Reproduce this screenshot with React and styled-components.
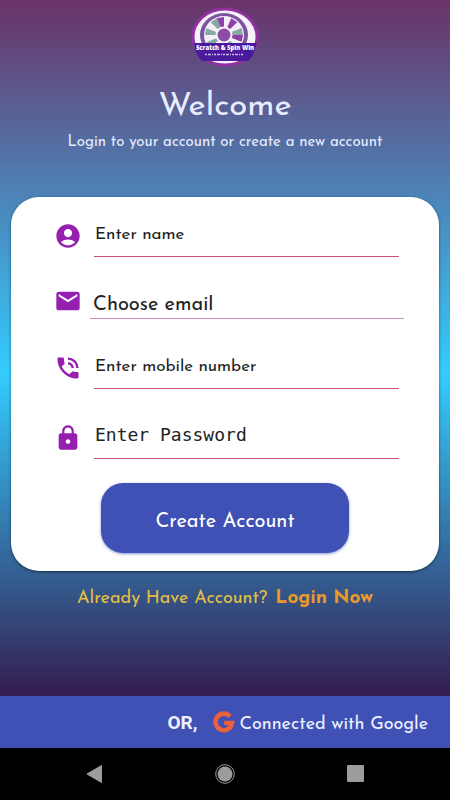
import React from 'react'
import styled, { createGlobalStyle } from 'styled-components'
import {
  MdAccountCircle,
  MdEmail,
  MdPhoneInTalk,
  MdLock,
} from 'react-icons/md'

const fields = [
  { id: 'name', type: 'text', text: 'Enter name', icon: <MdAccountCircle /> },
  { id: 'email', type: 'email', text: 'Choose email', icon: <MdEmail />, compact: true },
  { id: 'mobile', type: 'tel', text: 'Enter mobile number', icon: <MdPhoneInTalk /> },
  { id: 'password', type: 'password', text: 'Enter Password', icon: <MdLock />, mono: true },
]

const wedges = [
  '#8e3fa8', '#f4eef8', '#86a9a6', '#f4eef8', '#8e3fa8', '#f4eef8',
  '#86a9a6', '#f4eef8', '#86a9a6', '#f4eef8', '#86a9a6', '#8e3fa8',
  '#f4eef8', '#8e3fa8', '#f4eef8', '#86a9a6',
]

const Logo = () => {
  const point = (i) => {
    const a = (i * Math.PI * 2) / wedges.length
    return `${33 + 19 * Math.cos(a)} ${28 + 18 * Math.sin(a)}`
  }

  return (
    <svg width='68' height='60' viewBox='0 0 68 60' role='img' aria-label='Scratch & Spin Win'>
      <defs>
        <clipPath id='badge'>
          <ellipse cx='34' cy='30' rx='32' ry='28' />
        </clipPath>
      </defs>
      <ellipse cx='34' cy='30' rx='32' ry='28' fill='#f6f1fa' />
      <g clipPath='url(#badge)'>
        <ellipse cx='33' cy='28' rx='24' ry='22' fill='#7d559c' />
        <ellipse cx='33' cy='28' rx='20' ry='19' fill='#f6f1fa' />
        {wedges.map((color, i) => (
          <path key={i} d={`M33 28L${point(i)}L${point(i + 1)}Z`} fill={color} />
        ))}
        <circle cx='33' cy='28' r='8.500' fill='#f6f1fa' />
        <circle cx='33' cy='28' r='6.500' fill='#8b4ba6' />
      </g>
      <ellipse cx='34' cy='30' rx='32' ry='28' fill='none' stroke='#93309f' strokeWidth='3' />
      <path d='M3 36H66L63 45Q61 51 57 54H11Q6 49 4 43Z' fill='#4a1a9c' />
      <LogoText x='34' y='43' textAnchor='middle'>Scratch &amp; Spin Win</LogoText>
      <path d='M14 47.500H53' stroke='#cdb9e6' strokeWidth='1.400' strokeDasharray='2 1 3 1 1 1' />
    </svg>
  )
}

const GoogleIcon = () => (
  <svg width='22' height='22' viewBox='0 0 22 22' aria-hidden='true'>
    <path
      d='M17.100 5.400A8.300 8.300 0 1 0 19.100 12H11.200'
      fill='none'
      stroke='#e8603c'
      strokeWidth='4.600'
    />
  </svg>
)

const App = () => {
  return (
    <>
      <GlobalStyle />
      <Page>
        <Header>
          <Logo />
          <h1>Welcome</h1>
          <p>Login to your account or create a new account</p>
        </Header>
        <Card onSubmit={(e) => e.preventDefault()}>
          {fields.map(({ id, type, text, icon, compact, mono }) => (
            <Field key={id} $compact={compact}>
              <label htmlFor={id} aria-label={text}>{icon}</label>
              <Input
                id={id}
                type={type}
                placeholder={text}
                $compact={compact}
                $mono={mono}
              />
            </Field>
          ))}
          <SubmitButton type='submit'>Create Account</SubmitButton>
        </Card>
        <LoginRow>
          <span>Already Have Account?</span>
          <a href='#login'>Login Now</a>
        </LoginRow>
        <GoogleBar>
          <strong>OR,</strong>
          <GoogleButton type='button'>
            <GoogleIcon />
            <span>Connected with Google</span>
          </GoogleButton>
        </GoogleBar>
      </Page>
      <SystemNav>
        <button type='button' aria-label='Back'>
          <svg width='20' height='20' viewBox='0 0 20 20'>
            <path d='M3 10L17.500 1.500V18.500Z' fill='#9c9c9c' stroke='#9c9c9c' strokeLinejoin='round' />
          </svg>
        </button>
        <button type='button' aria-label='Home'>
          <svg width='20' height='20' viewBox='0 0 20 20'>
            <circle cx='10' cy='10' r='7.500' fill='#9c9c9c' />
            <circle cx='10' cy='10' r='9.300' fill='none' stroke='#9c9c9c' />
          </svg>
        </button>
        <button type='button' aria-label='Recent apps'>
          <svg width='20' height='20' viewBox='0 0 20 20'>
            <rect x='1' y='1' width='17' height='17' rx='1' fill='#9c9c9c' />
          </svg>
        </button>
      </SystemNav>
    </>
  )
}

const GlobalStyle = createGlobalStyle`
  * {
    box-sizing: border-box;
  }
  body {
    margin: 0;
    background: #000;
  }
  #root {
    min-height: 100vh;
    display: flex;
    flex-direction: column;
  }
  body, button, input {
    font-family: 'Josefin Sans', Lato, sans-serif;
  }
  button {
    border: 0;
    padding: 0;
    background: none;
    cursor: pointer;
  }
  svg {
    display: block;
  }
`

const LogoText = styled.text`
  fill: #fff;
  font-family: 'Open Sans', sans-serif;
  font-size: 6px;
  font-weight: 800;
`

const Page = styled.main`
  flex: 1;
  display: flex;
  flex-direction: column;
  background: linear-gradient(#693368, #33ccff 50%, #360033);
`

const Header = styled.header`
  display: flex;
  flex-direction: column;
  align-items: center;
  padding-top: 7px;
  color: #e8ecff;
  text-align: center;
  h1 {
    margin: 20px 0 0;
    font-size: 33px;
    font-weight: 400;
    line-height: 40px;
  }
  p {
    margin: 6px 0 0;
    font-size: 15px;
    line-height: 20px;
  }
`

const Card = styled.form`
  display: flex;
  flex-direction: column;
  margin: 44px 11px 0;
  padding: 12px 40px 18px;
  border-radius: 28px;
  background: #fff;
  box-shadow: 0 1px 3px rgba(0, 0, 0, 0.5);
`

const Field = styled.div`
  display: flex;
  align-items: center;
  gap: ${({ $compact }) => ($compact ? '8px' : '12px')};
  margin-top: ${({ $compact }) => ($compact ? '30px' : '22px')};
  margin-left: 3px;
  margin-right: ${({ $compact }) => ($compact ? '-5px' : '0')};
  &:first-child {
    margin-top: 0;
  }
  label {
    padding: ${({ $compact }) => ($compact ? '0 0 4px' : '6px 0 0')};
    color: #951fae;
    font-size: 28px;
  }
`

const Input = styled.input`
  flex: 1;
  min-width: 0;
  height: ${({ $compact }) => ($compact ? '32px' : '48px')};
  padding: ${({ $compact, $mono }) => ($compact ? '4px 3px 0' : $mono ? '0 1px' : '3px 1px 0')};
  border: 0;
  border-bottom: 1px solid ${({ $compact }) => ($compact ? '#d08fbb' : '#c2517f')};
  border-radius: 0;
  outline: 0;
  background: none;
  color: #111;
  font-size: ${({ $compact, $mono }) => ($compact ? '20px' : $mono ? '18px' : '17px')};
  ${({ $mono }) => $mono && "font-family: 'DejaVu Sans Mono', monospace;"}
  &::placeholder {
    color: #222;
    opacity: 1;
  }
`

const SubmitButton = styled.button`
  align-self: center;
  width: 248px;
  height: 70px;
  margin-top: 24px;
  padding-top: 8px;
  border-radius: 22px;
  background: #3f51b5;
  box-shadow: 0 1px 3px rgba(63, 81, 181, 0.6);
  color: #fff;
  font-size: 20px;
`

const LoginRow = styled.div`
  display: flex;
  justify-content: center;
  align-items: center;
  gap: 8px;
  margin: 16px 0;
  color: #e3c044;
  font-size: 18px;
  line-height: 24px;
  a {
    color: #e99a2c;
    font-size: 19px;
    font-weight: 700;
    text-decoration: none;
  }
`

const GoogleBar = styled.section`
  display: flex;
  justify-content: flex-end;
  align-items: center;
  gap: 16px;
  height: 52px;
  margin-top: auto;
  padding: 0 22px;
  background: #3f51b5;
  color: #eef2ff;
  strong {
    font-family: Roboto, sans-serif;
    font-size: 19px;
    font-weight: 700;
  }
`

const GoogleButton = styled.button`
  display: flex;
  align-items: center;
  gap: 4px;
  color: #eef2ff;
  font-size: 18px;
  span {
    padding-top: 6px;
  }
`

const SystemNav = styled.nav`
  display: grid;
  grid-template-columns: repeat(3, 1fr);
  height: 52px;
  padding: 0 29px;
  background: #000;
  button {
    display: flex;
    justify-content: center;
    align-items: center;
  }
`

export default App
